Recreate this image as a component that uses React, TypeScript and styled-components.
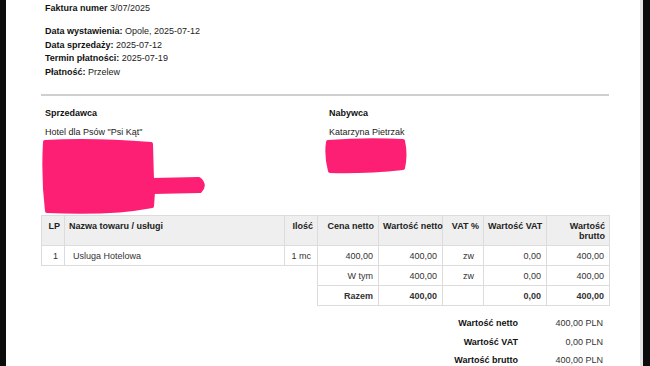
import React from "react";
import styled, { createGlobalStyle } from "styled-components";

const GlobalStyle = createGlobalStyle`
  html, body {
    margin: 0;
    padding: 0;
    background: #0c0c0c;
  }
  body {
    font-family: "Liberation Sans", Arial, sans-serif;
  }
`;

const Screen = styled.div`
  display: flex;
  width: 650px;
  height: 366px;
  overflow: hidden;
  background: #0c0c0c;
`;

const Page = styled.div`
  margin-left: 6px;
  width: 637px;
  height: 366px;
  padding-top: 3px;
  box-sizing: border-box;
  background: #fff;
  border-right: 3px solid #e6e6e6;
  color: #222;
  font-size: 9px;
`;

const Content = styled.div`
  margin-left: 35px;
  width: 568px;
  display: flex;
  flex-direction: column;
`;

const Line = styled.div<{ $h?: number }>`
  padding-left: 4px;
  line-height: ${(p) => p.$h ?? 11}px;
  height: ${(p) => p.$h ?? 11}px;
  white-space: nowrap;
`;

const Meta = styled.div`
  margin-top: 11px;
  display: flex;
  flex-direction: column;
`;

const Strong = styled.b`
  font-weight: bold;
  color: #111;
`;

const Rule = styled.div`
  margin-top: 15px;
  height: 2px;
  background: #cfcfcf;
`;

const Parties = styled.div`
  margin-top: 12px;
  display: grid;
  grid-template-columns: 284px 284px;
`;

const Party = styled.div`
  display: flex;
  flex-direction: column;
`;

const PartyName = styled(Line)`
  margin-top: 7.5px;
`;

const Scribble = styled.svg`
  display: block;
`;

const Table = styled.table`
  margin-top: 1px;
  width: 568px;
  border-collapse: collapse;
  table-layout: fixed;
  font-size: 9px;
  line-height: 10px;
`;

const Th = styled.th<{ $left?: boolean }>`
  background: #efefef;
  border: 1px solid #dcdcdc;
  padding: 5px 4px 4px;
  height: 20px;
  vertical-align: top;
  text-align: ${(p) => (p.$left ? "left" : "right")};
  font-weight: bold;
  color: #222;
  white-space: nowrap;
`;

const Td = styled.td<{ $left?: boolean; $bold?: boolean; $pad?: number }>`
  border: 1px solid #dcdcdc;
  padding: 5px ${(p) => p.$pad ?? 5}px 4px ${(p) => (p.$left ? 8 : 4)}px;
  height: 10px;
  text-align: ${(p) => (p.$left ? "left" : "right")};
  font-weight: ${(p) => (p.$bold ? "bold" : "normal")};
  color: #333;
  white-space: nowrap;
`;

const Blank = styled.td`
  border: none;
`;

const Totals = styled.div`
  margin-top: 12.5px;
  margin-right: 6px;
  align-self: flex-end;
  display: grid;
  grid-template-columns: auto 85px;
  row-gap: 7.5px;
  line-height: 11px;
`;

const TotalLabel = styled.div`
  text-align: right;
  font-weight: bold;
  color: #111;
`;

const TotalValue = styled.div`
  text-align: right;
  color: #333;
`;

const PINK = "#fd1f74";

const rows = [
  { label: "W tym", net: "400,00", vat: "zw", vatVal: "0,00", gross: "400,00" },
];

export default function App() {
  return (
    <>
      <GlobalStyle />
      <Screen>
        <Page>
          <Content>
            <Line>
              <Strong>Faktura numer</Strong> 3/07/2025
            </Line>
            <Meta>
              <Line $h={13.6}>
                <Strong>Data wystawienia:</Strong> Opole, 2025-07-12
              </Line>
              <Line $h={13.6}>
                <Strong>Data sprzedaży:</Strong> 2025-07-12
              </Line>
              <Line $h={13.6}>
                <Strong>Termin płatności:</Strong> 2025-07-19
              </Line>
              <Line $h={13.6}>
                <Strong>Płatność:</Strong> Przelew
              </Line>
            </Meta>
            <Rule />
            <Parties>
              <Party>
                <Line>
                  <Strong>Sprzedawca</Strong>
                </Line>
                <PartyName>Hotel dla Psów "Psi Kąt"</PartyName>
                <Scribble width="170" height="76" viewBox="0 0 170 76">
                  <path
                    d="M4,4 Q50,1 110,6 L111,42 L158,41 Q165,47 159,53 L112,54 L111,68 Q70,76 6,73 Q2,40 4,4 Z"
                    fill={PINK}
                    stroke={PINK}
                    strokeWidth="4"
                    strokeLinejoin="round"
                  />
                </Scribble>
              </Party>
              <Party>
                <Line>
                  <Strong>Nabywca</Strong>
                </Line>
                <PartyName>Katarzyna Pietrzak</PartyName>
                <Scribble width="90" height="38" viewBox="0 0 90 38">
                  <path
                    d="M3,4 Q40,1 78,3 Q81,17 78,30 Q40,34 5,33 Q1,18 3,4 Z"
                    fill={PINK}
                    stroke={PINK}
                    strokeWidth="4"
                    strokeLinejoin="round"
                  />
                </Scribble>
              </Party>
            </Parties>
            <Table>
              <colgroup>
                <col style={{ width: 23 }} />
                <col style={{ width: 220 }} />
                <col style={{ width: 33 }} />
                <col style={{ width: 61 }} />
                <col style={{ width: 64 }} />
                <col style={{ width: 41 }} />
                <col style={{ width: 63 }} />
                <col style={{ width: 63 }} />
              </colgroup>
              <thead>
                <tr>
                  <Th>LP</Th>
                  <Th $left>Nazwa towaru / usługi</Th>
                  <Th>Ilość</Th>
                  <Th>Cena netto</Th>
                  <Th>Wartość netto</Th>
                  <Th>VAT %</Th>
                  <Th>Wartość VAT</Th>
                  <Th>
                    Wartość
                    <br />
                    brutto
                  </Th>
                </tr>
              </thead>
              <tbody>
                <tr>
                  <Td $pad={6}>1</Td>
                  <Td $left>Usluga Hotelowa</Td>
                  <Td $pad={6}>1 mc</Td>
                  <Td>400,00</Td>
                  <Td>400,00</Td>
                  <Td $pad={9}>zw</Td>
                  <Td>0,00</Td>
                  <Td>400,00</Td>
                </tr>
                {rows.map((r) => (
                  <tr key={r.label}>
                    <Blank colSpan={3} />
                    <Td>{r.label}</Td>
                    <Td>{r.net}</Td>
                    <Td $pad={9}>{r.vat}</Td>
                    <Td>{r.vatVal}</Td>
                    <Td>{r.gross}</Td>
                  </tr>
                ))}
                <tr>
                  <Blank colSpan={3} />
                  <Td $bold>Razem</Td>
                  <Td $bold>400,00</Td>
                  <Td />
                  <Td $bold>0,00</Td>
                  <Td $bold>400,00</Td>
                </tr>
              </tbody>
            </Table>
            <Totals>
              <TotalLabel>Wartość netto</TotalLabel>
              <TotalValue>400,00 PLN</TotalValue>
              <TotalLabel>Wartość VAT</TotalLabel>
              <TotalValue>0,00 PLN</TotalValue>
              <TotalLabel>Wartość brutto</TotalLabel>
              <TotalValue>400,00 PLN</TotalValue>
            </Totals>
          </Content>
        </Page>
      </Screen>
    </>
  );
}
